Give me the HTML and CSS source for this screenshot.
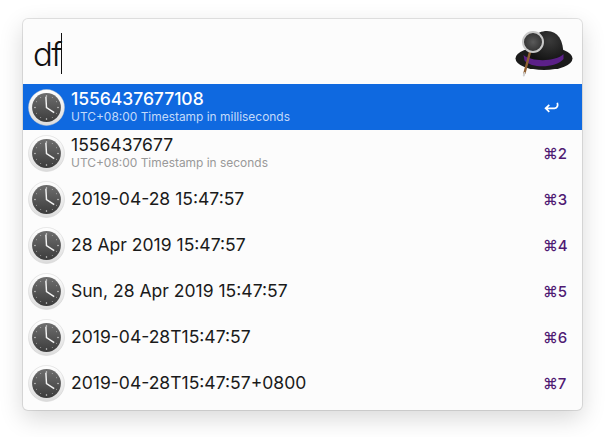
FILE: index.html
```html
<!DOCTYPE html>
<html lang="en">
<head>
<meta charset="utf-8">
<title>Alfred</title>
<link rel="stylesheet" href="styles.css">
</head>
<body>
<svg class="defs" width="0" height="0" aria-hidden="true">
  <defs>
    <linearGradient id="face" x1="0" y1="0" x2="0" y2="1">
      <stop offset="0" stop-color="#6e6e6e"/>
      <stop offset="1" stop-color="#3c3c3c"/>
    </linearGradient>
    <linearGradient id="rim" x1="0" y1="0" x2="0" y2="1">
      <stop offset="0" stop-color="#ffffff"/>
      <stop offset="1" stop-color="#dcdcdc"/>
    </linearGradient>
    <symbol id="clock" viewBox="0 0 36 36">
      <circle cx="18" cy="18" r="17.500" fill="url(#rim)" stroke="#c9c9c9" stroke-width=".4"/>
      <circle cx="18" cy="18" r="14" fill="url(#face)"/>
      <g fill="#dcdcdc">
        <circle cx="18" cy="6.800" r=".7"/><circle cx="18" cy="29.200" r=".7"/>
        <circle cx="6.800" cy="18" r=".7"/><circle cx="29.200" cy="18" r=".7"/>
        <circle cx="23.600" cy="8.300" r=".45"/><circle cx="27.700" cy="12.400" r=".45"/>
        <circle cx="27.700" cy="23.600" r=".45"/><circle cx="23.600" cy="27.700" r=".45"/>
        <circle cx="12.400" cy="27.700" r=".45"/><circle cx="8.300" cy="23.600" r=".45"/>
        <circle cx="8.300" cy="12.400" r=".45"/><circle cx="12.400" cy="8.300" r=".45"/>
      </g>
      <path d="M17.400 7.500 L18 18 L25.500 23" fill="none" stroke="#f4f4f4" stroke-width="1.400"/>
    </symbol>
  </defs>
</svg>
<main class="window">
  <header class="search">
    <div class="query"><span class="typed">df</span><i class="caret"></i></div>
    <svg class="hat" viewBox="0 0 60 56" width="60" height="56" aria-hidden="true">
      <defs>
        <radialGradient id="crown" cx="60%" cy="30%" r="70%">
          <stop offset="0" stop-color="#3a3a3a"/>
          <stop offset="1" stop-color="#121212"/>
        </radialGradient>
        <radialGradient id="lens" cx="50%" cy="50%" r="55%">
          <stop offset="0" stop-color="#5a5a5a"/>
          <stop offset="1" stop-color="#2e2e2e"/>
        </radialGradient>
      </defs>
      <ellipse cx="30" cy="29.500" rx="28.500" ry="11.500" fill="#1b1b1b"/>
      <path d="M15 27 C15 10 22 2 33 2 C44 2 49.500 11 49.500 27 C49.500 36 15 36 15 27Z" fill="url(#crown)"/>
      <path d="M9.500 26 C17 33 42 33 49.500 25 L49.500 30 C42 39 18 40 10.500 31.500Z" fill="#5b2088"/>
      <path d="M16 23 L10.500 44" stroke="#8f5f32" stroke-width="2.400" stroke-linecap="round"/>
      <path d="M10.500 44 L9.800 46.500" stroke="#cfcfcf" stroke-width="2" stroke-linecap="round"/>
      <circle cx="19" cy="13" r="10" fill="url(#lens)" stroke="#c8c8c8" stroke-width="2"/>
    </svg>
  </header>
  <ul class="results">
    <li class="row selected">
      <svg class="icon"><use href="#clock"/></svg>
      <div class="text"><div class="title">1556437677108</div><div class="sub">UTC+08:00 Timestamp in milliseconds</div></div>
      <svg class="return" viewBox="0 0 15 11" width="15" height="11" aria-hidden="true">
        <path d="M13.300 .8 C14 3 13.700 6.300 10.500 6.300 L2 6.300 M5.300 2.800 L1.600 6.300 L5.300 9.800" fill="none" stroke="#fff" stroke-width="1.700"/>
      </svg>
    </li>
    <li class="row">
      <svg class="icon"><use href="#clock"/></svg>
      <div class="text"><div class="title">1556437677</div><div class="sub">UTC+08:00 Timestamp in seconds</div></div>
      <span class="key">⌘2</span>
    </li>
    <li class="row">
      <svg class="icon"><use href="#clock"/></svg>
      <div class="text"><div class="title">2019-04-28 15:47:57</div></div>
      <span class="key">⌘3</span>
    </li>
    <li class="row">
      <svg class="icon"><use href="#clock"/></svg>
      <div class="text"><div class="title">28 Apr 2019 15:47:57</div></div>
      <span class="key">⌘4</span>
    </li>
    <li class="row">
      <svg class="icon"><use href="#clock"/></svg>
      <div class="text"><div class="title">Sun, 28 Apr 2019 15:47:57</div></div>
      <span class="key">⌘5</span>
    </li>
    <li class="row">
      <svg class="icon"><use href="#clock"/></svg>
      <div class="text"><div class="title">2019-04-28T15:47:57</div></div>
      <span class="key">⌘6</span>
    </li>
    <li class="row">
      <svg class="icon"><use href="#clock"/></svg>
      <div class="text"><div class="title">2019-04-28T15:47:57+0800</div></div>
      <span class="key">⌘7</span>
    </li>
  </ul>
</main>
</body>
</html>
```
FILE: styles.css
```css
* { box-sizing: border-box; }
html, body { margin: 0; height: 100%; overflow: hidden; background: #fff; }
body { padding: 19px 23px 0; font-family: Inter, "Liberation Sans", sans-serif; }
.defs { display: block; height: 0; }
.window {
  width: 559px;
  height: 391px;
  background: #fcfcfc;
  border-radius: 5px;
  overflow: hidden;
  box-shadow: 0 0 0 1px rgba(0,0,0,.10), 0 8px 24px rgba(0,0,0,.16);
}
.search {
  height: 65px;
  display: flex;
  align-items: center;
  justify-content: space-between;
  padding: 0 8px 0 10px;
}
.query {
  display: flex;
  align-items: center;
  font-family: Inter, sans-serif;
  font-weight: 300;
  font-size: 33px;
  line-height: 42px;
  color: #111;
  padding-top: 4px;
}
.typed { letter-spacing: -1.500px; }
.caret { display: block; width: 1px; height: 41px; background: #111; }
.hat { display: block; margin-top: 10px; }
.results { list-style: none; margin: 0; padding: 0; }
.row {
  height: 46px;
  display: flex;
  align-items: center;
  padding: 0 14px 0 5px;
  color: #1a1a1a;
}
.icon { width: 37px; height: 37px; flex: none; }
.text { flex: 1; margin-left: 6px; min-width: 0; padding-bottom: 2px; }
.title { font-size: 17.550px; line-height: 21px; }
.sub { font-size: 11.950px; line-height: 14px; color: #999; margin-top: 1px; }
.key { width: 25px; flex: none; font-size: 15px; color: #4f1a73; font-weight: 500; }
.selected { background: #0f69e0; color: #fff; }
.selected .title { font-weight: 500; letter-spacing: -.05px; }
.selected .sub { color: #c3dafa; }
.return { display: block; margin-right: 9px; }
```
